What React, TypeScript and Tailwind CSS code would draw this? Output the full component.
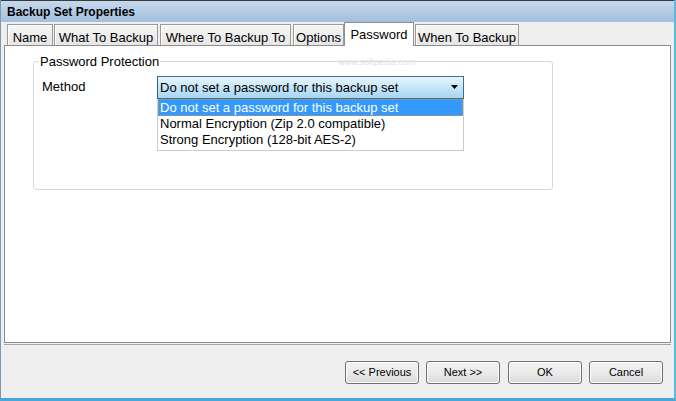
import React from "react";

const font = { fontFamily: '"Liberation Sans", Arial, sans-serif' };

function Tab({ label, w, ml, selected }: { label: string; w: string; ml: string; selected?: boolean }) {
  if (selected) {
    return (
      <div
        className={`${w} ${ml} relative z-10 -mb-px flex h-[24px] items-start justify-center border border-b-0 border-[#8f8f8f] bg-white pt-[2px] text-[13px] text-black`}
      >
        {label}
      </div>
    );
  }
  return (
    <div
      className={`${w} ${ml} flex h-[21px] items-start justify-center border border-b-0 border-[#9a9a9a] bg-gradient-to-b from-[#f6f6f6] to-[#e6e6e6] pt-[3px] text-[13px] text-black shadow-[inset_1px_1px_0_#ffffff]`}
    >
      {label}
    </div>
  );
}

function Btn({ label }: { label: string }) {
  return (
    <div className="flex h-[23px] w-[74px] items-center justify-center rounded-[3px] border border-[#707070] bg-gradient-to-b from-[#f2f2f2] via-[#ebebeb] to-[#dadada] text-[11px] text-black shadow-[inset_0_0_0_1px_#fcfcfc]">
      {label}
    </div>
  );
}

export default function App() {
  return (
    <div
      style={font}
      className="relative flex h-[401px] w-[676px] flex-col overflow-hidden border-b-[3px] border-l border-r-2 border-b-[#4aa6d9] border-l-[#7f98b2] border-r-[#5cb9e4] bg-[#efefef]"
    >
      {/* Title bar */}
      <div className="flex h-[22px] shrink-0 items-center border-t border-t-[#3a3a3a] bg-gradient-to-b from-[#c6d8ed] to-[#a3bedd] pl-[6px] text-[12px] font-bold text-black">
        Backup Set Properties
      </div>

      {/* Body */}
      <div className="flex flex-1 flex-col px-[3px]">
        {/* Tabs */}
        <div className="flex h-[23px] shrink-0 items-end pl-[3px]">
          <Tab label="Name" w="w-[46px]" ml="ml-0" />
          <Tab label="What To Backup" w="w-[104px]" ml="ml-[1px]" />
          <Tab label="Where To Backup To" w="w-[131px]" ml="ml-[2px]" />
          <Tab label="Options" w="w-[51px]" ml="ml-[2px]" />
          <Tab label="Password" w="w-[70px]" ml="ml-0" selected />
          <Tab label="When To Backup" w="w-[104px]" ml="ml-[1px]" />
        </div>

        {/* Panel */}
        <div className="relative h-[298px] shrink-0 border border-[#8d8d8d] bg-white">
          <fieldset className="ml-[28px] mt-[8px] h-[136px] w-[520px] rounded-[3px] border border-[#d3dae2] pl-[5px] text-[13px] text-black">
            <legend className="px-[1px] leading-[15px]">Password Protection</legend>
            <div className="mt-[7px] flex items-start">
              <div className="w-[118px] pl-[3px] pt-[3px] leading-[16px]">Method</div>
              <div className="relative w-[307px]">
                <div className="flex h-[23px] items-center justify-between border border-[#3c6f95] border-l-[#33607f] bg-gradient-to-b from-[#e8f5fd] via-[#c6e6f8] to-[#a6d6f2] pl-[2px] pr-[4px]">
                  <span>Do not set a password for this backup set</span>
                  <svg width="8" height="5" viewBox="0 0 8 5">
                    <path d="M0 0 H7 L3.5 4 Z" fill="#000" />
                  </svg>
                </div>
                {/* dropdown list */}
                <div className="absolute left-0 top-[23px] z-20 w-[307px] border border-t-0 border-[#c9ced6] bg-white pb-[2px]">
                  <div className="h-[17px] border border-dotted border-[#e4902c] bg-[#3399ff] pl-[1px] leading-[15px] text-white">
                    Do not set a password for this backup set
                  </div>
                  <div className="h-[16px] pl-[2px] leading-[16px]">Normal Encryption (Zip 2.0 compatible)</div>
                  <div className="h-[16px] pl-[2px] leading-[16px]">Strong Encryption (128-bit AES-2)</div>
                </div>
              </div>
            </div>
          </fieldset>
          <div className="absolute left-[333px] top-[10px] text-[9px] text-[#e2e2e2]">www.softpedia.com</div>
        </div>

        {/* Bottom buttons */}
        <div className="mt-[1px] flex flex-1 items-start justify-end gap-[7px] border-t border-t-[#a5a5a5] pr-[8px] pt-[16px]">
          <Btn label="<< Previous" />
          <Btn label="Next >>" />
          <div className="ml-[1px]">
            <Btn label="OK" />
          </div>
          <Btn label="Cancel" />
        </div>
      </div>
    </div>
  );
}
